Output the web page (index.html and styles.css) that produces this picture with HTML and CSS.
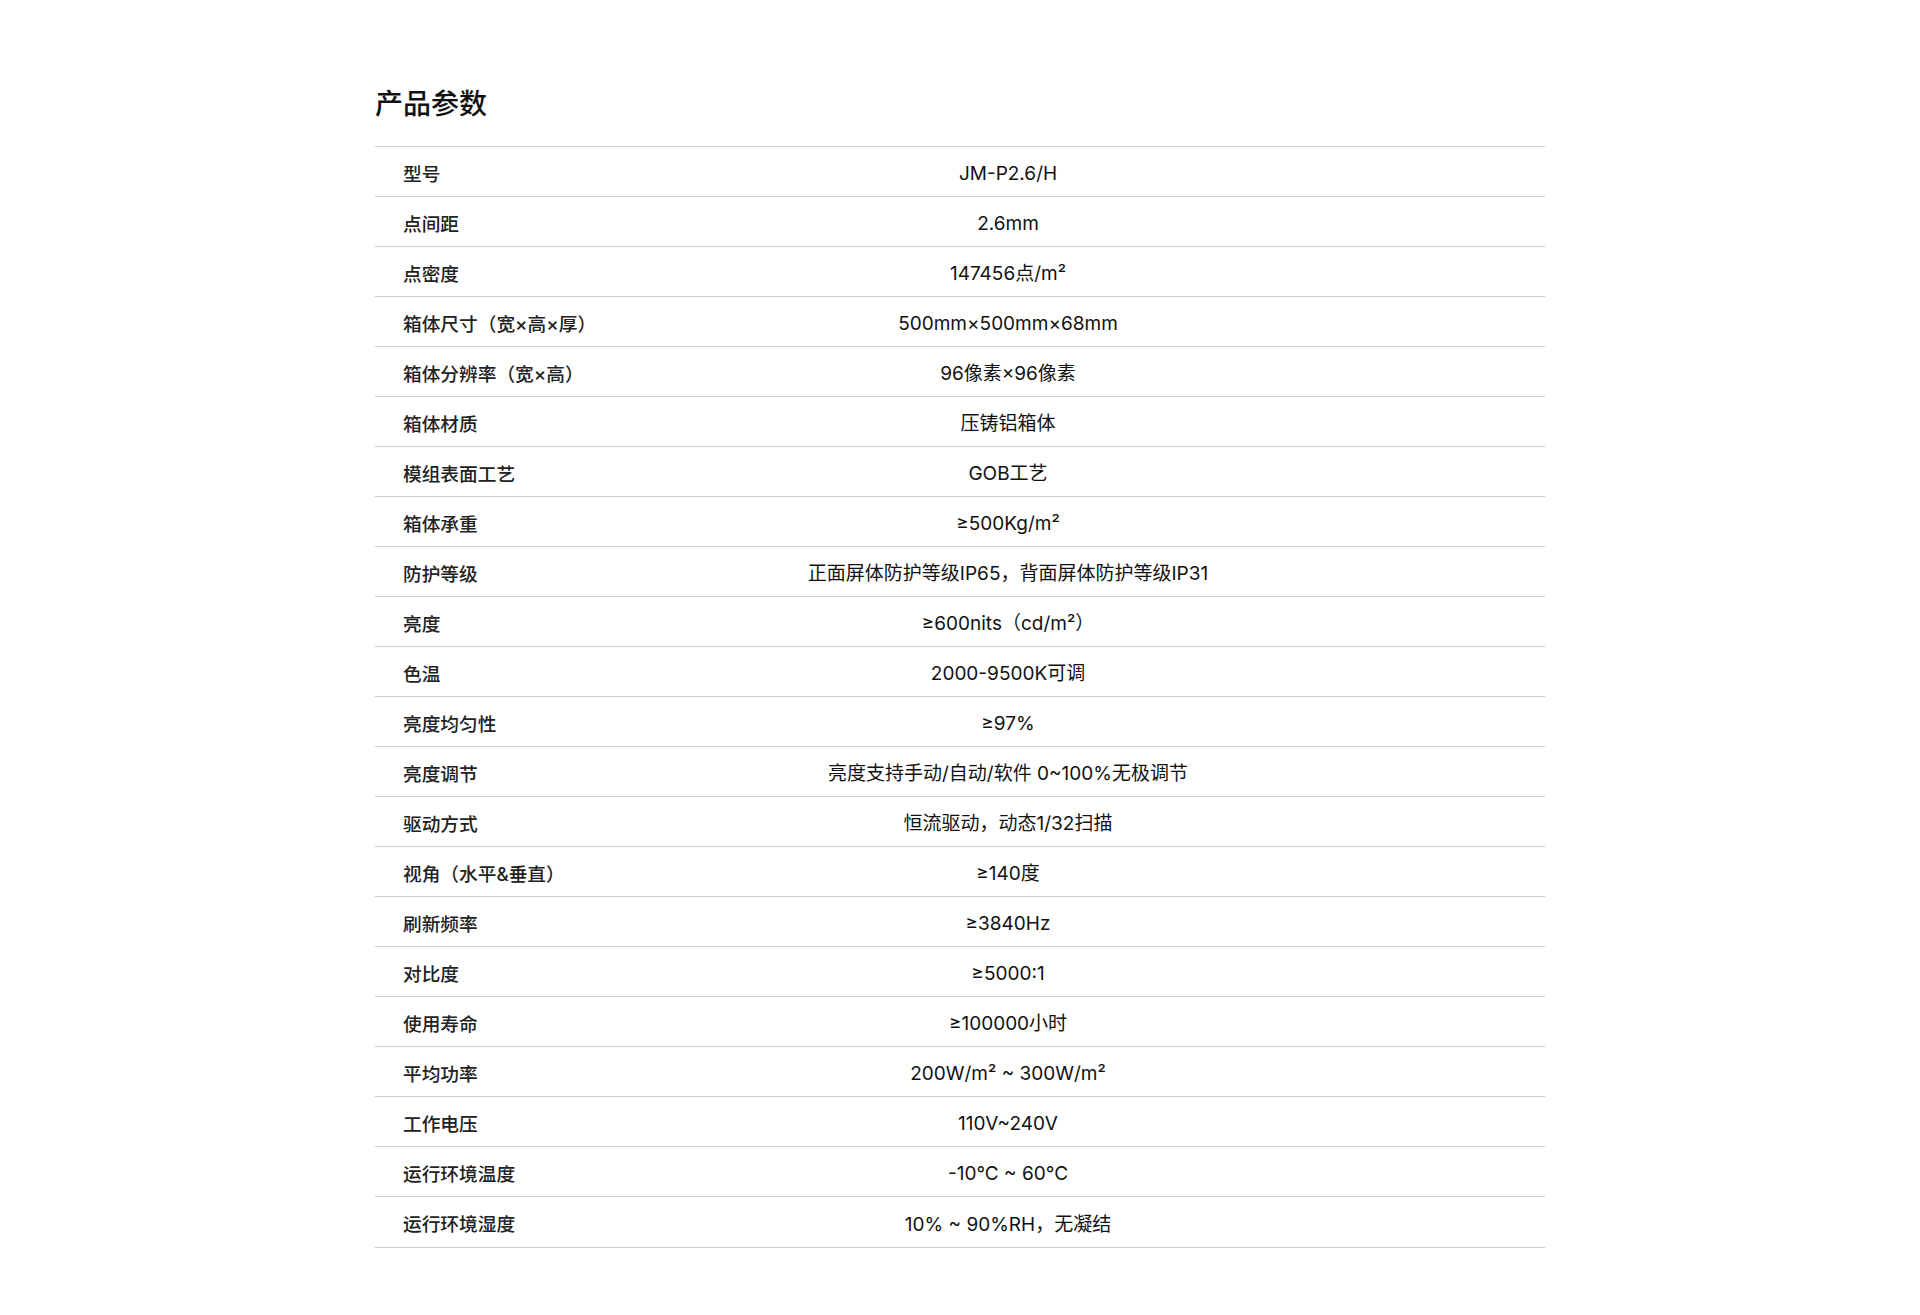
FILE: index.html
```html
<!DOCTYPE html>
<html lang="zh-CN">
<head>
<meta charset="utf-8">
<title>产品参数</title>
<link rel="stylesheet" href="styles.css">
</head>
<body>
<section class="params">
  <h2 class="params-title">产品参数</h2>
  <div class="params-table">
    <div class="row"><div class="label">型号</div><div class="value">JM-P2.6/H</div></div>
    <div class="row"><div class="label">点间距</div><div class="value">2.6mm</div></div>
    <div class="row"><div class="label">点密度</div><div class="value">147456点/m²</div></div>
    <div class="row"><div class="label">箱体尺寸（宽×高×厚）</div><div class="value">500mm×500mm×68mm</div></div>
    <div class="row"><div class="label">箱体分辨率（宽×高）</div><div class="value">96像素×96像素</div></div>
    <div class="row"><div class="label">箱体材质</div><div class="value">压铸铝箱体</div></div>
    <div class="row"><div class="label">模组表面工艺</div><div class="value">GOB工艺</div></div>
    <div class="row"><div class="label">箱体承重</div><div class="value">≥500Kg/m²</div></div>
    <div class="row"><div class="label">防护等级</div><div class="value">正面屏体防护等级IP65，背面屏体防护等级IP31</div></div>
    <div class="row"><div class="label">亮度</div><div class="value">≥600nits（cd/m²）</div></div>
    <div class="row"><div class="label">色温</div><div class="value">2000-9500K可调</div></div>
    <div class="row"><div class="label">亮度均匀性</div><div class="value">≥97%</div></div>
    <div class="row"><div class="label">亮度调节</div><div class="value">亮度支持手动/自动/软件 0~100%无极调节</div></div>
    <div class="row"><div class="label">驱动方式</div><div class="value">恒流驱动，动态1/32扫描</div></div>
    <div class="row"><div class="label">视角（水平&amp;垂直）</div><div class="value">≥140度</div></div>
    <div class="row"><div class="label">刷新频率</div><div class="value">≥3840Hz</div></div>
    <div class="row"><div class="label">对比度</div><div class="value">≥5000:1</div></div>
    <div class="row"><div class="label">使用寿命</div><div class="value">≥100000小时</div></div>
    <div class="row"><div class="label">平均功率</div><div class="value">200W/m² ~ 300W/m²</div></div>
    <div class="row"><div class="label">工作电压</div><div class="value">110V~240V</div></div>
    <div class="row"><div class="label">运行环境温度</div><div class="value">-10°C ~ 60°C</div></div>
    <div class="row"><div class="label">运行环境湿度</div><div class="value">10% ~ 90%RH，无凝结</div></div>
  </div>
</section>
</body>
</html>
```

FILE: styles.css
```css
html, body {
  margin: 0;
  padding: 0;
  background: #ffffff;
}

body {
  font-family: Inter, "Noto Sans CJK SC", sans-serif;
  color: #222222;
}

.params {
  width: 1170px;
  margin: 0 auto;
  padding-top: 83px;
}

.params-title {
  margin: 0 0 24px 0;
  font-family: "Noto Sans CJK SC", sans-serif;
  font-size: 28px;
  line-height: 39px;
  font-weight: 500;
  color: #111111;
}

.params-table {
  border-top: 1px solid #cccccc;
}

.row {
  display: grid;
  grid-template-columns: 300px 1fr;
  align-items: center;
  height: 50px;
  box-sizing: border-box;
  border-bottom: 1px solid #cccccc;
}

.row:last-child {
  height: 51px;
}

.label {
  padding-left: 28px;
  padding-top: 6px;
  font-size: 18.7px;
  line-height: 26px;
  font-weight: 500;
  color: #222222;
  white-space: nowrap;
}

.value {
  padding-right: 204px;
  padding-top: 5px;
  text-align: center;
  font-size: 19px;
  line-height: 26px;
  font-weight: 400;
  color: #111111;
  white-space: nowrap;
}
```
